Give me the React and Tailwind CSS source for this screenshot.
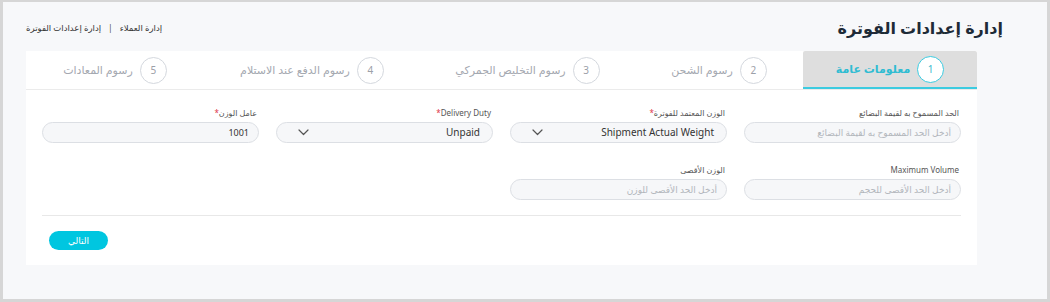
import React from "react";

const tabs = [
  { n: 1, t: "معلومات عامة", active: true, w: "w-[174px]" },
  { n: 2, t: "رسوم الشحن", w: "w-[168px]" },
  { n: 3, t: "رسوم التخليص الجمركي", w: "w-[215px]" },
  { n: 4, t: "رسوم الدفع عند الاستلام", w: "w-[216px]" },
  { n: 5, t: "رسوم المعادات", w: "w-[178px]" },
];

function Chevron() {
  return (
    <svg width="11" height="7" viewBox="0 0 11 7" fill="none" className="shrink-0">
      <path d="M1 1l4.5 4.5L10 1" stroke="#555" strokeWidth="1.2" strokeLinecap="round" strokeLinejoin="round" />
    </svg>
  );
}

function Label({ children, req }) {
  return (
    <div className="text-[8px] leading-[10px] text-[#555] mb-[4px] pr-[2px]">
      {children}
      {req && <span className="text-[#e0344a]">*</span>}
    </div>
  );
}

function Input({ placeholder, value }) {
  return (
    <div className="h-[21px] rounded-full border border-[#dcdfe4] bg-[#f6f7f9] flex items-center pr-[9px] pl-[14px] text-[9px]">
      {value ? (
        <span className="text-[#333]">{value}</span>
      ) : (
        <span className="text-[#b2b6bc]">{placeholder}</span>
      )}
    </div>
  );
}

function Select({ value }) {
  return (
    <div className="h-[21px] rounded-full border border-[#dcdfe4] bg-[#f6f7f9] flex items-center justify-between pr-[12px] pl-[21px] text-[10px] text-[#333]">
      <span>{value}</span>
      <Chevron />
    </div>
  );
}

export default function App() {
  return (
    <div
      dir="rtl"
      className="w-[1050px] h-[302px] bg-[#f7f8fa] border-[#d6d6d6] border-t-[2px] border-l-[3px] border-r-[3px] border-b-[3px] flex flex-col"
      style={{ fontFamily: '"Noto Sans", "DejaVu Sans", sans-serif' }}
    >
      <div className="h-[49px] flex items-center justify-between pr-[44px] pl-[23px] shrink-0">
        <h1 className="text-[16px] font-semibold text-[#1e2b37] leading-none mt-[2px]">إدارة إعدادات الفوترة</h1>
        <div className="flex items-center gap-[7px] text-[8.5px] text-[#333] mt-[4px]">
          <span>إدارة العملاء</span>
          <span className="text-[#555]">|</span>
          <span>إدارة إعدادات الفوترة</span>
        </div>
      </div>
      <div className="mr-[70px] ml-[23px] w-[951px] h-[214px] bg-white flex flex-col">
        <div className="flex h-[39px] border-b border-[#ebebeb] shrink-0">
          {tabs.map((tb) => (
            <div
              key={tb.n}
              className={
                tb.w +
                " shrink-0 flex items-center justify-center gap-[7px] " +
                (tb.active ? "bg-[#dedede] border-b-[2px] border-[#3ccbe0] rounded-t-[2px]" : "")
              }
            >
              <div
                className={
                  "w-[27px] h-[27px] rounded-full flex items-center justify-center text-[10px] " +
                  (tb.active
                    ? "bg-white border border-[#3ccbe0] text-[#3ab8cc]"
                    : "border border-[#d4d8de] text-[#9ca0a8]")
                }
              >
                {tb.n}
              </div>
              <span
                className={
                  "text-[11px] " + (tb.active ? "text-[#2fbcd2] font-semibold" : "text-[#a4a8b0]")
                }
              >
                {tb.t}
              </span>
            </div>
          ))}
        </div>
        <div className="px-[16px] pt-[18px]">
          <div className="grid grid-cols-4 gap-x-[17px] gap-y-[22px]">
            <div>
              <Label>الحد المسموح به لقيمة البضائع</Label>
              <Input placeholder="أدخل الحد المسموح به لقيمة البضائع" />
            </div>
            <div>
              <Label req>الوزن المعتمد للفوترة</Label>
              <Select value="Shipment Actual Weight" />
            </div>
            <div>
              <Label req>Delivery Duty</Label>
              <Select value="Unpaid" />
            </div>
            <div>
              <Label req>عامل الوزن</Label>
              <Input value="1001" />
            </div>
            <div>
              <Label>Maximum Volume</Label>
              <Input placeholder="أدخل الحد الأقصى للحجم" />
            </div>
            <div>
              <Label>الوزن الأقصى</Label>
              <Input placeholder="أدخل الحد الأقصى للوزن" />
            </div>
          </div>
          <div className="mt-[15px] border-t border-[#e8e8e8]" />
          <div className="flex justify-end pl-[7px] mt-[15px]">
            <button className="w-[59px] h-[19px] rounded-full bg-[#00c6e0] text-white text-[9px] font-medium flex items-center justify-center">
              التالي
            </button>
          </div>
        </div>
      </div>
    </div>
  );
}
